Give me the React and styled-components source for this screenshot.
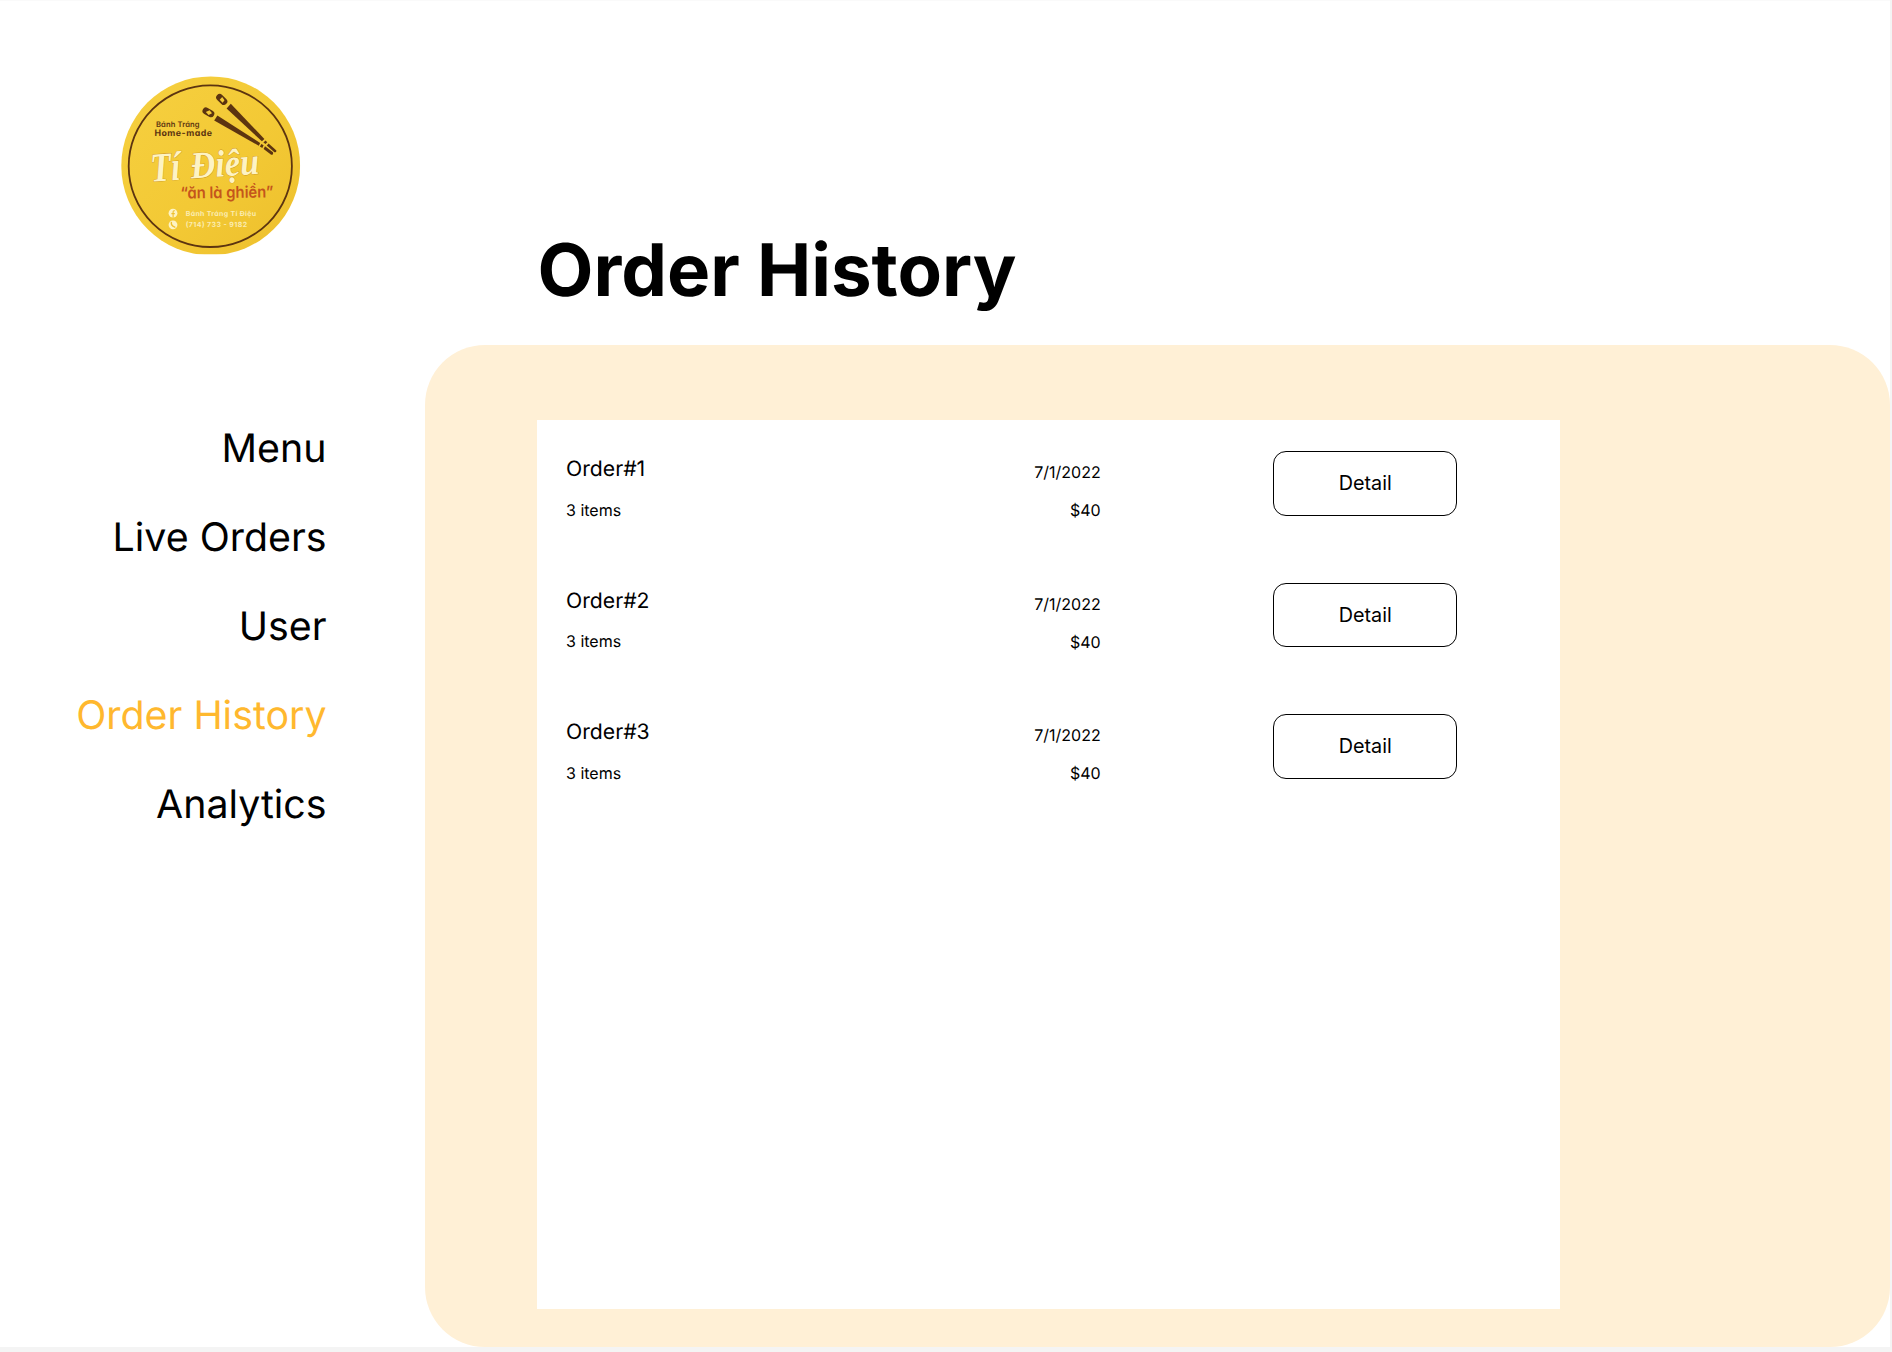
import React from "react";
import styled, { createGlobalStyle } from "styled-components";

const Global = createGlobalStyle`
  * { box-sizing: border-box; }
  html, body { margin: 0; background: #f4f4f4; overflow: hidden; }
  body {
    font-family: Inter, "Liberation Sans", sans-serif;
    color: #000;
    text-rendering: geometricPrecision;
  }
`;

const Page = styled.div`
  width: 1890px;
  height: 1347px;
  border-top: 1px solid #fafafa;
  background: #fff;
  display: grid;
  grid-template-columns: 425px 1465px;
`;

const Sidebar = styled.aside`
  display: flex;
  flex-direction: column;
  padding: 73px 98.5px 0 0;
`;

const LogoArt = styled.svg`
  display: block;
  width: 184px;
  height: 184px;
  margin-left: 118px;
`;

const Nav = styled.nav`
  display: flex;
  flex-direction: column;
  margin-top: 147.4px;
  text-align: right;
`;

const NavLink = styled.a`
  height: 88.8px;
  line-height: 88.8px;
  font-size: 39.35px;
  white-space: nowrap;
  color: ${(p) => (p.$active ? "#ffb82e" : "#000")};
`;

const Main = styled.main`
  display: flex;
  flex-direction: column;
`;

const Title = styled.h1`
  margin: 0;
  height: 344px;
  padding: 225px 0 0 112.5px;
  font-size: 72.6px;
  line-height: 88px;
  font-weight: 700;
  white-space: nowrap;
`;

const Panel = styled.section`
  height: 1002px;
  padding: 75px 0 0 112px;
  border-radius: 60px;
  background: #fff0d6;
`;

const Orders = styled.ul`
  margin: 0;
  width: 1023px;
  height: 888.5px;
  padding: 31px 0 0 29px;
  list-style: none;
  background: #fff;
`;

const Order = styled.li`
  height: 131.6px;
  display: grid;
  grid-template-columns: 300px 234.7px 184px;
  align-items: start;
`;

const Info = styled.div`
  display: flex;
  flex-direction: column;
  padding-top: ${(p) => (p.$end ? "2px" : "1px")};
  gap: ${(p) => (p.$end ? "0" : "3.6px")};
  text-align: ${(p) => (p.$end ? "right" : "left")};
`;

const Name = styled.span`
  font-size: 21.2px;
  line-height: 35px;
`;

const Small = styled.span`
  font-size: 16px;
  line-height: 38px;
`;

const Detail = styled.button`
  width: 184px;
  height: 64.5px;
  margin-left: 172.6px;
  padding: 0;
  border: 1.3px solid #000;
  border-radius: 13px;
  background: #fff;
  color: #000;
  font: 400 19.8px Inter, sans-serif;
`;

const Rounded = styled.g`
  font-family: Inter, sans-serif;
  font-feature-settings: "cv11";
`;

const brown = "#5c3410";
const cream = "#fdf3c4";

function Logo() {
  return (
    <LogoArt viewBox="0 0 184 184" role="img" aria-label="Tí Điệu">
      <defs>
        <linearGradient id="gold" x1="0" y1="0" x2="1" y2="1">
          <stop offset="0" stopColor="#f6d040" />
          <stop offset="0.55" stopColor="#f3c935" />
          <stop offset="1" stopColor="#edbf2c" />
        </linearGradient>
        <clipPath id="trim">
          <rect x="3" y="2" width="179.3" height="178.2" />
        </clipPath>
      </defs>
      <circle cx="92.7" cy="91.8" r="89.4" fill="url(#gold)" clipPath="url(#trim)" />
      <ellipse cx="92.3" cy="92.2" rx="81.6" ry="80.8" fill="none" stroke={brown} strokeWidth="1.8" />

      <g fill={brown}>
        <g stroke={brown} strokeWidth="7" strokeLinecap="round">
          <path d="M101.7 23.4 L105.8 27.4" />
          <path d="M88 37 L92.8 39.7" />
        </g>
        <path d="M112.8 29.8 L146.4 65 L143.9 67.3 L108.6 34.4 Z" />
        <path d="M147.5 66.5 L149.3 68.2 L147.5 70 L145.4 68.4 Z" />
        <path d="M150.6 69.6 L158.4 76.4 Q158.4 78.8 156.4 78.2 L148.8 71.5 Z" />
        <path d="M99.4 41.6 L142.2 68.9 L140.8 71.8 L96.2 46.6 Z" />
        <path d="M143.4 70 L145.6 71.3 L144.3 74 L141.9 72.6 Z" />
        <path d="M147 72.2 L155 78.2 Q155.6 81 153.2 80.8 L145.6 75 Z" />
      </g>
      <path d="M104.2 22.9 L106.5 26.2 L104.6 28.7 L101.7 25.7 Z" fill="#f5cb36" />
      <path d="M87.8 38 L91.6 36.2 L94 39.3 L90.6 41 Z" fill="#f5cb36" />

      <Rounded fill={brown}>
        <text x="38" y="53.4" fontSize="7.6" fontWeight="600" textLength="43.5">Bánh Tráng</text>
        <text x="36.4" y="61.8" fontSize="8.8" fontWeight="700" textLength="57.6">Home-made</text>
      </Rounded>

      <g
        fontFamily="'Liberation Serif', serif"
        fontStyle="italic"
        fontWeight="700"
        fill={cream}
        stroke="#c98f24"
        strokeWidth="0.7"
        paintOrder="stroke"
        transform="rotate(-4 87 102)"
      >
        <text x="33" y="104" fontSize="41" textLength="30" lengthAdjust="spacingAndGlyphs">Tí</text>
        <text x="73" y="103.5" fontSize="38" textLength="69" lengthAdjust="spacingAndGlyphs">Điệu</text>
      </g>

      <Rounded fill="#c4551c" transform="rotate(-0.8 62 125)">
        <text
          x="62.5"
          y="124.6"
          fontSize="16"
          fontWeight="600"
          textLength="93"
          lengthAdjust="spacingAndGlyphs"
        >
          “ăn là ghiền”
        </text>
      </Rounded>

      <g fill={cream}>
        <circle cx="55" cy="139.2" r="4.4" />
        <circle cx="55" cy="150.8" r="4.4" />
        <Rounded fontWeight="700" fontSize="7" opacity="0.85">
          <text x="67.7" y="141.8" textLength="70.5">Bánh Tráng Tí Điệu</text>
          <text x="67.7" y="153.4" textLength="61.5">(714) 733 - 9182</text>
        </Rounded>
      </g>
      <path d="M56.8 136.7 H56 Q55.1 136.7 55.1 137.8 V143.4 M53.4 139.6 H56.8" fill="none" stroke="#efc02d" strokeWidth="1.1" />
      <path d="M53.4 148.4 Q52.7 151.6 56.8 153.2" fill="none" stroke="#efc02d" strokeWidth="1.4" strokeLinecap="round" />
    </LogoArt>
  );
}

const links = ["Menu", "Live Orders", "User", "Order History", "Analytics"];
const orders = [1, 2, 3];

export default function App() {
  return (
    <>
      <Global />
      <Page>
        <Sidebar>
          <Logo />
          <Nav>
            {links.map((label) => (
              <NavLink key={label} $active={label === "Order History"}>{label}</NavLink>
            ))}
          </Nav>
        </Sidebar>
        <Main>
          <Title>Order History</Title>
          <Panel>
            <Orders>
              {orders.map((n) => (
                <Order key={n}>
                  <Info>
                    <Name>Order#{n}</Name>
                    <Small>3 items</Small>
                  </Info>
                  <Info $end>
                    <Small>7/1/2022</Small>
                    <Small>$40</Small>
                  </Info>
                  <Detail>Detail</Detail>
                </Order>
              ))}
            </Orders>
          </Panel>
        </Main>
      </Page>
    </>
  );
}
